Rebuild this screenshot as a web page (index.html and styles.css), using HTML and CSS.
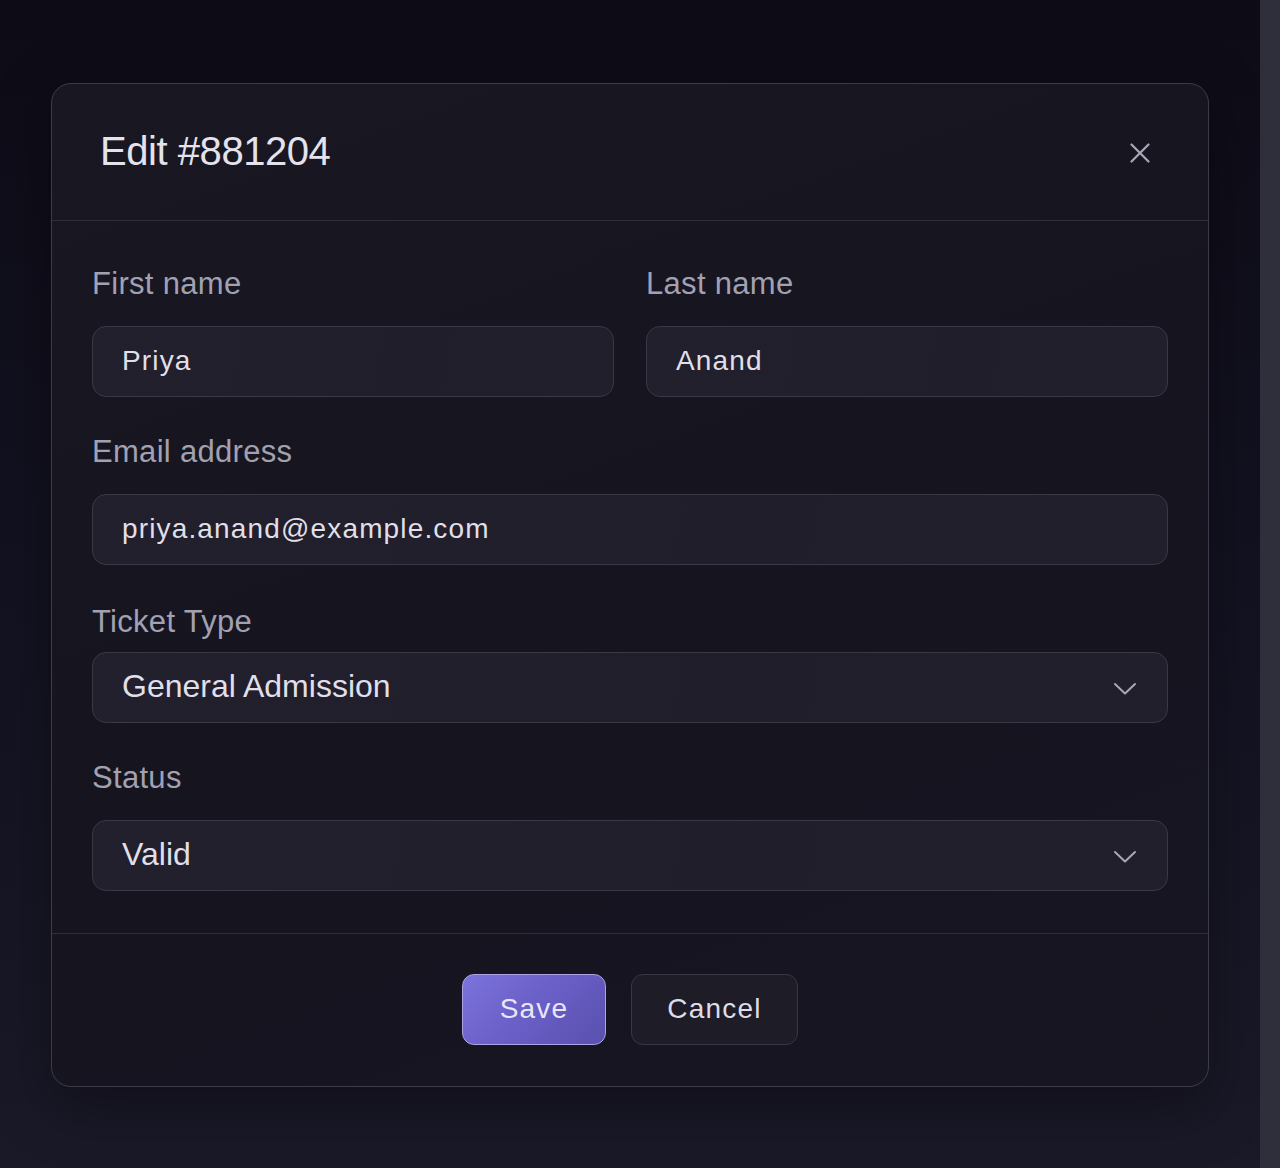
FILE: index.html
```html
<!DOCTYPE html>
<html lang="en">
<head>
<meta charset="utf-8">
<title>Edit #881204</title>
<link rel="stylesheet" href="styles.css">
</head>
<body>
<div class="page">
  <main class="stage">
    <section class="modal" role="dialog" aria-labelledby="modal-title">
      <header class="modal-header">
        <h1 class="modal-title" id="modal-title">Edit #881204</h1>
        <button class="close-btn" type="button" aria-label="Close">
          <svg width="20" height="20" viewBox="0 0 20 20" aria-hidden="true">
            <path d="M1.5 1.5 L18.5 18.5 M18.5 1.5 L1.5 18.5" fill="none" stroke="currentColor" stroke-width="2.2" stroke-linecap="round"/>
          </svg>
        </button>
      </header>
      <form class="modal-body">
        <div class="row two">
          <div class="field">
            <label class="label" for="first">First name</label>
            <div class="input" id="first">Priya</div>
          </div>
          <div class="field">
            <label class="label" for="last">Last name</label>
            <div class="input" id="last">Anand</div>
          </div>
        </div>
        <div class="field">
          <label class="label" for="email">Email address</label>
          <div class="input" id="email">priya.anand@example.com</div>
        </div>
        <div class="field">
          <label class="label label-tight" for="ticket">Ticket Type</label>
          <div class="select" id="ticket">
            <span>General Admission</span>
            <svg class="chev" width="24" height="14" viewBox="0 0 24 14" aria-hidden="true">
              <path d="M2 2 L12 11.5 L22 2" fill="none" stroke="currentColor" stroke-width="2" stroke-linecap="round" stroke-linejoin="round"/>
            </svg>
          </div>
        </div>
        <div class="field">
          <label class="label" for="status">Status</label>
          <div class="select" id="status">
            <span>Valid</span>
            <svg class="chev" width="24" height="14" viewBox="0 0 24 14" aria-hidden="true">
              <path d="M2 2 L12 11.5 L22 2" fill="none" stroke="currentColor" stroke-width="2" stroke-linecap="round" stroke-linejoin="round"/>
            </svg>
          </div>
        </div>
      </form>
      <footer class="modal-footer">
        <button class="btn btn-primary" type="button">Save</button>
        <button class="btn btn-secondary" type="button">Cancel</button>
      </footer>
    </section>
  </main>
  <aside class="scroll-strip"></aside>
</div>
</body>
</html>
```

FILE: styles.css
```css
* { box-sizing: border-box; }

html, body {
  margin: 0;
  padding: 0;
  height: 1168px;
}

body {
  font-family: "Liberation Sans", Arial, sans-serif;
  background: #0e0d18;
  color: #e3e2ec;
}

.page {
  display: flex;
  height: 1168px;
}

.stage {
  flex: 1;
  padding-top: 83px;
  display: flex;
  justify-content: center;
  align-items: flex-start;
  background: linear-gradient(180deg, #0d0c16 0%, #121120 45%, #1a1928 100%);
}

.scroll-strip {
  width: 20px;
  background: #2f2f3b;
}

.modal {
  width: 1158px;
  border: 1px solid #3c3b49;
  border-radius: 20px;
  background: linear-gradient(160deg, #181722 0%, #15141f 50%, #161521 100%);
  box-shadow: 0 20px 60px rgba(0, 0, 0, 0.35);
}

.modal-header {
  height: 137px;
  padding: 0 48px 0 48px;
  display: flex;
  align-items: center;
  justify-content: space-between;
  border-bottom: 1px solid #2f2e3b;
}

.modal-title {
  margin: 0;
  font-size: 40px;
  font-weight: 400;
  letter-spacing: -0.45px;
  color: #e4e3ec;
  line-height: 46px;
  padding-bottom: 3px;
}

.close-btn {
  width: 40px;
  height: 40px;
  padding: 0;
  border: 0;
  background: transparent;
  color: #a9a8b8;
  display: flex;
  align-items: center;
  justify-content: center;
  margin-top: 2px;
}

.modal-body {
  padding: 44px 40px 42px;
  display: flex;
  flex-direction: column;
  gap: 36px;
  border-bottom: 1px solid #2f2e3b;
}

.row.two {
  display: grid;
  grid-template-columns: 1fr 1fr;
  gap: 32px;
}

.field {
  display: flex;
  flex-direction: column;
}

.label {
  font-size: 31px;
  line-height: 37px;
  letter-spacing: 0.3px;
  color: #a2a1b2;
  margin-bottom: 24px;
}

.label-tight {
  padding-top: 2px;
  margin-bottom: 12px;
}

.input,
.select {
  height: 71px;
  border: 1px solid #393846;
  border-radius: 14px;
  background: linear-gradient(100deg, #21202c 0%, #1f1e2a 60%, #201f2b 100%);
  padding: 0 29px;
  display: flex;
  align-items: center;
  color: #e0dfea;
}

.input {
  font-size: 28px;
  letter-spacing: 1.15px;
  padding-bottom: 1px;
}

.select {
  font-size: 32px;
  justify-content: space-between;
  padding-right: 30px;
  padding-bottom: 2px;
}

.chev {
  color: #a9a8b8;
  margin-top: 4px;
}

.modal-footer {
  padding: 40px 0 41px;
  display: flex;
  justify-content: center;
  gap: 25px;
}

.btn {
  height: 71px;
  font-family: "Liberation Sans", Arial, sans-serif;
  font-size: 28px;
  letter-spacing: 1.2px;
  border-radius: 12px;
  padding: 0 0 2px;
  display: flex;
  align-items: center;
  justify-content: center;
}

.btn-primary {
  width: 144px;
  color: #e8e6f8;
  border: 1.5px solid #aaa3e6;
  background: linear-gradient(135deg, #7d73dc 0%, #6a60c8 45%, #5a50ae 100%);
}

.btn-secondary {
  width: 167px;
  color: #dddce7;
  border: 1px solid #383745;
  background: #1d1c27;
}
```
